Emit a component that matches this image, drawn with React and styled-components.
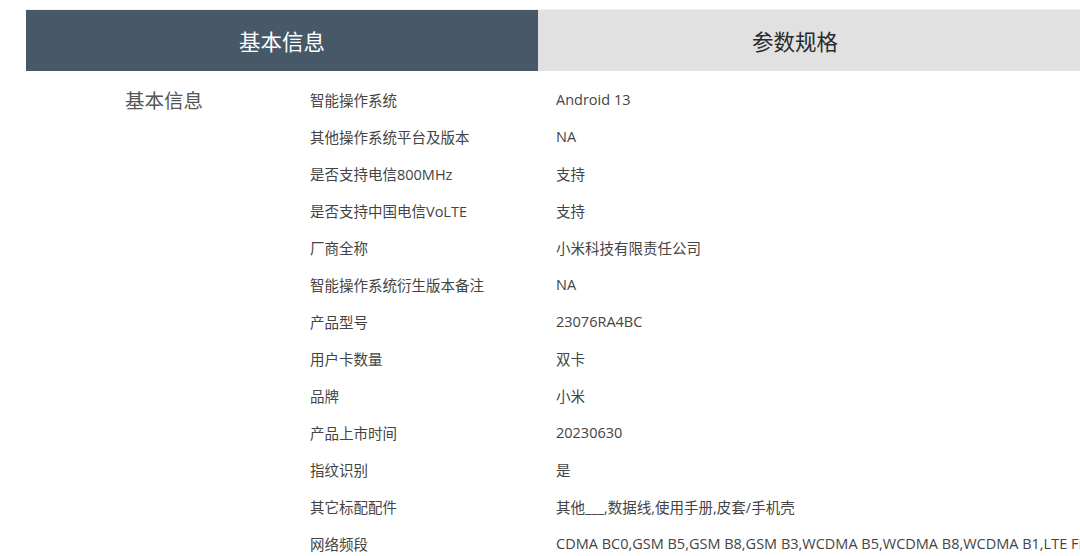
import styled, { createGlobalStyle } from "styled-components";

const FONT_STACK = `"Open Sans", "Noto Sans CJK SC", sans-serif`;

const GlobalStyle = createGlobalStyle`
  html, body {
    margin: 0;
    padding: 0;
    background: #ffffff;
    overflow: hidden;
  }

  body {
    font-family: ${FONT_STACK};
  }
`;

const BASIC_INFO = [
  { label: "智能操作系统", value: "Android 13" },
  { label: "其他操作系统平台及版本", value: "NA" },
  { label: "是否支持电信800MHz", value: "支持" },
  { label: "是否支持中国电信VoLTE", value: "支持" },
  { label: "厂商全称", value: "小米科技有限责任公司" },
  { label: "智能操作系统衍生版本备注", value: "NA" },
  { label: "产品型号", value: "23076RA4BC" },
  { label: "用户卡数量", value: "双卡" },
  { label: "品牌", value: "小米" },
  { label: "产品上市时间", value: "20230630" },
  { label: "指纹识别", value: "是" },
  { label: "其它标配配件", value: "其他___,数据线,使用手册,皮套/手机壳" },
  {
    label: "网络频段",
    value:
      "CDMA BC0,GSM B5,GSM B8,GSM B3,WCDMA B5,WCDMA B8,WCDMA B1,LTE FDD B1,LTE FDD B3",
  },
];

const Page = styled.div`
  width: 1100px;
  padding: 9px 0 0 26px;
`;

const Tabs = styled.div`
  display: grid;
  grid-template-columns: 512px 512px;
  gap: 1px;
  background-color: #e1e1e1;
  border-top: 1px solid #eef0f2;
`;

const Tab = styled.div`
  height: 61px;
  display: flex;
  align-items: center;
  justify-content: center;
  font-size: 21.5px;
  background-color: ${({ active }) => (active ? "#475869" : "#e1e1e1")};
  color: ${({ active }) => (active ? "#ffffff" : "#2b2b2b")};
`;

const Section = styled.section`
  display: grid;
  grid-template-columns: 185px 1fr;
  padding: 10px 0 0 99px;
`;

const SectionTitle = styled.h3`
  margin: 0;
  height: 37px;
  display: flex;
  align-items: center;
  font-size: 19.5px;
  font-weight: 400;
  color: #555555;
`;

const Rows = styled.div`
  display: flex;
  flex-direction: column;
`;

const Row = styled.div`
  display: grid;
  grid-template-columns: 246px 1fr;
  height: 37px;
  align-items: center;
  font-size: 14.5px;
  color: #444444;
  white-space: nowrap;
`;

const Label = styled.span``;

const Value = styled.span`
  overflow: hidden;
`;

const App = () => (
  <>
    <GlobalStyle />
    <Page>
      <Tabs>
        <Tab active>基本信息</Tab>
        <Tab>参数规格</Tab>
      </Tabs>
      <Section>
        <SectionTitle>基本信息</SectionTitle>
        <Rows>
          {BASIC_INFO.map(({ label, value }) => (
            <Row key={label}>
              <Label>{label}</Label>
              <Value>{value}</Value>
            </Row>
          ))}
        </Rows>
      </Section>
    </Page>
  </>
);

export default App;
